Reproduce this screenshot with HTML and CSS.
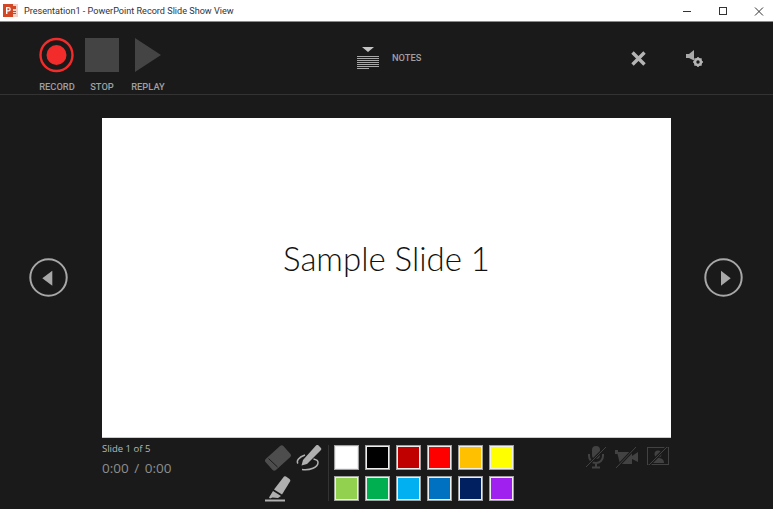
FILE: index.html
```html
<!DOCTYPE html>
<html lang="en">
<head>
<meta charset="utf-8">
<title>Presentation1 - PowerPoint Record Slide Show View</title>
<link rel="stylesheet" href="styles.css">
</head>
<body>
<div class="app">
  <header class="titlebar">
    <svg class="app-icon" width="15" height="15" viewBox="0 0 15 15">
      <rect x="5" y="1" width="10" height="13" fill="#f3d3c8"/>
      <rect x="10" y="3" width="3" height="3" fill="#d24726"/>
      <rect x="10" y="8" width="3" height="1" fill="#d24726"/>
      <rect x="10" y="10" width="3" height="1" fill="#d24726"/>
      <rect x="0" y="1" width="10" height="13" fill="#d24726"/>
      <path d="M3 11V4h2.600a2.100 2.100 0 0 1 0 4.400H4.400V11zM4.400 5.200v2h1.100a1 1 0 0 0 0-2z" fill="#fff"/>
    </svg>
    <span class="title-text">Presentation1 - PowerPoint Record Slide Show View</span>
    <div class="win-controls">
      <svg class="win-btn" width="36" height="18" viewBox="0 0 36 18"><path d="M14 9.500h8" stroke="#333" fill="none"/></svg>
      <svg class="win-btn" width="36" height="18" viewBox="0 0 36 18"><rect x="14.500" y="5.500" width="7" height="7" stroke="#333" fill="none"/></svg>
      <svg class="win-btn" width="36" height="18" viewBox="0 0 36 18"><path d="M14 5.500l8 8M22 5.500l-8 8" stroke="#333" fill="none"/></svg>
    </div>
  </header>

  <section class="toolbar">
    <div class="tool tool-record">
      <svg width="36" height="36" viewBox="0 0 36 36"><circle cx="17.500" cy="18" r="16" fill="none" stroke="#f22b2b" stroke-width="2.400"/><circle cx="17.500" cy="18" r="10" fill="#f22b2b"/></svg>
      <span class="tool-label">RECORD</span>
    </div>
    <div class="tool tool-stop">
      <svg width="34" height="36" viewBox="0 0 34 36"><rect x="0" y="1" width="34" height="34" fill="#444"/></svg>
      <span class="tool-label">STOP</span>
    </div>
    <div class="tool tool-replay">
      <svg width="26" height="36" viewBox="0 0 26 36"><path d="M0 1l26 17L0 35z" fill="#444"/></svg>
      <span class="tool-label">REPLAY</span>
    </div>
    <div class="notes">
      <svg width="22" height="23" viewBox="0 0 22 23">
        <path d="M5 0h12l-6 5z" fill="#c4c4c4"/>
        <path d="M0 9.500h22M0 11.500h22M0 13.500h22M0 15.500h22M0 17.500h22M0 19.500h22M0 21.500h12" stroke="#a8a8a8" fill="none"/>
      </svg>
      <span class="tool-label notes-label">NOTES</span>
    </div>
    <svg class="clear-icon" width="17" height="17" viewBox="0 0 17 17"><path d="M2.500 2.500l12 12M14.500 2.500l-12 12" stroke="#b4b4b4" stroke-width="3.400" fill="none"/></svg>
    <svg class="settings-icon" width="17" height="17" viewBox="0 0 17 17">
      <path d="M0 4h3l5-4v10.500L3 8H0z" fill="#a8a8a8"/>
      <circle cx="12" cy="12" r="3" fill="none" stroke="#b4b4b4" stroke-width="2.600"/>
      <path d="M12 7v2M12 15v2M7 12h2M15 12h2M8.500 8.500l1.400 1.400M14.100 14.100l1.400 1.400M15.500 8.500l-1.400 1.400M9.900 14.100l-1.400 1.400" stroke="#b4b4b4" stroke-width="1.500" fill="none"/>
    </svg>
  </section>

  <main class="stage">
    <svg class="nav-btn" width="40" height="40" viewBox="0 0 40 40"><circle cx="19.500" cy="19.500" r="18.200" fill="none" stroke="#a8a8a8" stroke-width="2"/><path d="M23.300 12.700v15L13.300 20.200z" fill="#a8a8a8"/></svg>
    <div class="slide"><span class="slide-title">Sample Slide 1</span></div>
    <svg class="nav-btn" width="40" height="40" viewBox="0 0 40 40"><circle cx="19.500" cy="19.500" r="18.200" fill="none" stroke="#a8a8a8" stroke-width="2"/><path d="M17 12.700v15l9.700-7.500z" fill="#a8a8a8"/></svg>
  </main>

  <footer class="bottom">
    <div class="timing">
      <div class="slide-count">Slide 1 of 5</div>
      <div class="time">0:00 / 0:00</div>
    </div>
    <div class="ink-tools">
      <svg class="ink-eraser" width="26" height="26" viewBox="0 0 26 26">
        <rect x="1" y="5.500" width="24" height="15" rx="2.500" transform="rotate(-42 13 13)" fill="#4d4d4d"/>
        <path d="M3.500 13.500l9 8.500" stroke="#1a1a1a" fill="none"/>
      </svg>
      <svg class="ink-pen" width="26" height="26" viewBox="0 0 26 26">
        <path d="M20 .500a2 2 0 0 1 3 .500l1.500 1.500a2 2 0 0 1 0 3L11 19l-5.500 1.500L7 15z" fill="#b0b0b0"/>
        <path d="M9 10C3 12 0 16 2 18.500M6 24.500c8 1 16-2 16-7 0-2-2-3-4.500-3.500" stroke="#b0b0b0" stroke-width="1.500" fill="none"/>
      </svg>
      <svg class="ink-marker" width="26" height="26" viewBox="0 0 26 26">
        <path d="M19 .500a2 2 0 0 1 2 0l3.500 2.500a2 2 0 0 1 .5 2.500L17 18.500l-8-5z" fill="#b0b0b0"/>
        <path d="M8 15l8 5-3 2-5.500-.5-2.500 1-1-1z" fill="#b0b0b0"/>
        <rect x="0" y="23.500" width="20" height="2" fill="#b0b0b0"/>
      </svg>
    </div>
    <div class="palette">
      <span class="swatch swatch-white"></span>
      <span class="swatch swatch-black"></span>
      <span class="swatch swatch-darkred"></span>
      <span class="swatch swatch-red"></span>
      <span class="swatch swatch-orange"></span>
      <span class="swatch swatch-yellow"></span>
      <span class="swatch swatch-lime"></span>
      <span class="swatch swatch-green"></span>
      <span class="swatch swatch-sky"></span>
      <span class="swatch swatch-blue"></span>
      <span class="swatch swatch-navy"></span>
      <span class="swatch swatch-purple"></span>
    </div>
    <div class="media">
      <svg width="22" height="24" viewBox="0 0 22 24">
        <rect x="7" y="1" width="8" height="13" rx="4" fill="#424242"/>
        <path d="M4 9v2a7 7 0 0 0 14 0V9M11 18v4M7 22.500h8" stroke="#424242" stroke-width="2" fill="none"/>
        <path d="M1 22L21 2" stroke="#1a1a1a" stroke-width="3" fill="none"/>
        <path d="M1 22L21 2" stroke="#424242" fill="none"/>
      </svg>
      <svg width="24" height="24" viewBox="0 0 24 24">
        <rect x="0" y="5" width="3" height="4" fill="#424242"/>
        <path d="M2 7h15v12H5z" fill="#424242"/>
        <path d="M17 11l6-4v10l-6-3z" fill="#424242"/>
        <path d="M1 23L21 2" stroke="#1a1a1a" stroke-width="3" fill="none"/>
        <path d="M1 23L21 2" stroke="#424242" fill="none"/>
      </svg>
      <svg width="22" height="20" viewBox="0 0 22 20">
        <rect x="0.500" y="0.500" width="21" height="17" fill="none" stroke="#424242"/>
        <circle cx="11" cy="7" r="3.500" fill="#424242"/>
        <path d="M5 16c0-4 3-5 6-5s6 1 6 5z" fill="#424242"/>
        <path d="M2 18L20 0" stroke="#1a1a1a" stroke-width="3" fill="none"/>
        <path d="M2 18L20 0" stroke="#424242" fill="none"/>
      </svg>
    </div>
  </footer>
</div>
</body>
</html>
```
FILE: styles.css
```css
* { box-sizing: border-box; }
html, body { margin: 0; padding: 0; }
body { width: 773px; height: 509px; overflow: hidden; background: #1a1a1a; font-family: "Open Sans", "Noto Sans", sans-serif; }
.app { display: flex; flex-direction: column; height: 509px; }

.titlebar { display: flex; align-items: center; height: 22px; flex: none; background: #fff; border-bottom: 1px solid #c9745c; padding-left: 3px; }
.app-icon { flex: none; }
.title-text { margin-left: 6px; font-family: Roboto, sans-serif; font-size: 9.100px; color: #333; white-space: nowrap; }
.win-controls { margin-left: auto; display: flex; margin-right: -4px; }
.win-btn { display: block; }

.toolbar { display: flex; align-items: flex-start; height: 73px; flex: none; border-bottom: 1px solid #333; padding-left: 39px; padding-top: 15px; }
.tool { display: flex; flex-direction: column; align-items: center; flex: none; }
.tool svg { display: block; }
.tool-record { width: 36px; }
.tool-stop { width: 54px; }
.tool-replay { width: 38px; }
.tool-label { font-family: Roboto, sans-serif; font-size: 9.300px; font-weight: 500; color: #a0a0a0; line-height: 14px; margin-top: 7px; white-space: nowrap; }
.notes { display: flex; align-items: center; width: 65px; margin-left: 190px; margin-top: 10px; flex: none; }
.notes svg { display: block; flex: none; }
.notes-label { margin: 0 0 1px 13px; }
.clear-icon { margin-left: 208px; margin-top: 13px; flex: none; }
.settings-icon { margin-left: 39px; margin-top: 13px; flex: none; }

.stage { display: flex; align-items: center; gap: 33px; height: 343px; padding: 23px 0 0 29px; flex: none; }
.slide { width: 569px; height: 320px; background: #fff; border-bottom: 1px solid #ccc; display: flex; align-items: center; justify-content: center; padding-bottom: 40px; flex: none; }
.nav-btn { display: block; flex: none; }
.slide-title { font-family: Lato, sans-serif; font-weight: 300; font-size: 33px; color: #111; }

.bottom { display: flex; flex: none; padding-left: 102px; padding-top: 4px; align-items: flex-start; }
.timing { width: 160px; flex: none; padding-top: 1px; }
.slide-count { font-size: 9.500px; color: #b8b8b8; line-height: 12px; }
.time { font-size: 13.500px; word-spacing: 2px; color: #8e8e8e; line-height: 20px; margin-top: 3px; }
.ink-tools { display: grid; grid-template-columns: 31px 26px; grid-template-rows: 31px 26px; width: 64px; height: 56px; flex: none; margin-left: 3px; border-right: 1px solid #333; margin-top: 3px; }
.ink-tools svg { display: block; }
.ink-marker { grid-column: 1; grid-row: 2; }
.palette { display: grid; grid-template-columns: repeat(6, 25px); grid-auto-rows: 25px; gap: 6px; margin-left: 5px; margin-top: 3px; flex: none; }
.swatch { display: block; width: 25px; height: 25px; border: 1px solid #a0a0a0; box-shadow: inset 0 0 0 1px #eee; }
.swatch-white { background: #fff; }
.swatch-black { background: #000; }
.swatch-darkred { background: #c00000; }
.swatch-red { background: #f00; }
.swatch-orange { background: #ffc000; }
.swatch-yellow { background: #ff0; }
.swatch-lime { background: #92d050; }
.swatch-green { background: #00b050; }
.swatch-sky { background: #00b0f0; }
.swatch-blue { background: #0070c0; }
.swatch-navy { background: #002060; }
.swatch-purple { background: #a020f0; }
.media { display: flex; align-items: center; gap: 8px; margin-left: 71px; margin-top: 2px; flex: none; height: 26px; }
.media svg { display: block; flex: none; }
```
